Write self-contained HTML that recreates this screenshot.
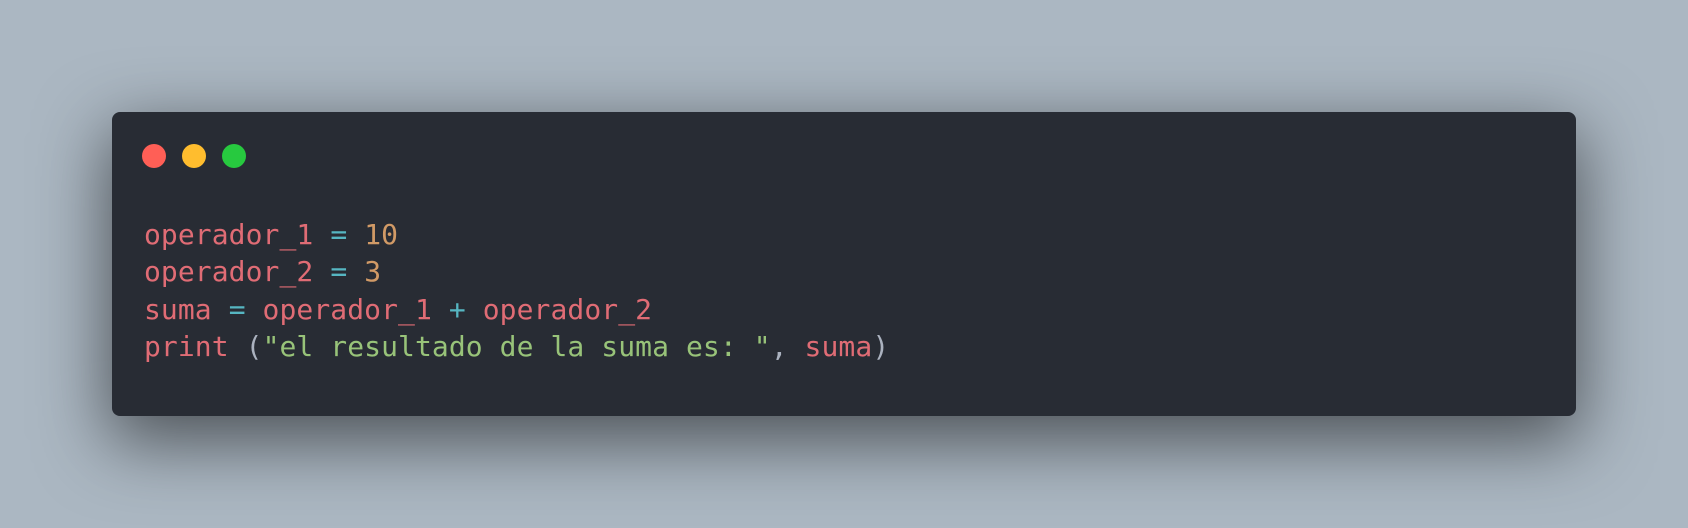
<!DOCTYPE html>
<html><head><style>
html,body{margin:0;padding:0;}
body{width:1688px;height:528px;background:#abb7c2;position:relative;overflow:hidden;}
.win{position:absolute;left:112px;top:112px;width:1464px;height:304px;background:#282c34;border-radius:8px;box-shadow:0 22px 70px 4px rgba(0,0,0,0.55);}
.dot{position:absolute;top:144px;width:24px;height:24px;border-radius:50%;}
pre{position:absolute;left:144px;top:216px;margin:0;font-family:"DejaVu Sans Mono","Liberation Mono",monospace;font-size:28px;line-height:37.3px;color:#e06c75;letter-spacing:0.08px;}
.c{color:#56b6c2}.o{color:#d19a66}.g{color:#98c379}.p{color:#abb2bf}
</style></head><body>
<div class="win"></div>
<div class="dot" style="left:142px;background:#ff5f56"></div>
<div class="dot" style="left:182px;background:#ffbd2e"></div>
<div class="dot" style="left:222px;background:#27c93f"></div>
<pre>operador_1 <span class="c">=</span> <span class="o">10</span>
operador_2 <span class="c">=</span> <span class="o">3</span>
suma <span class="c">=</span> operador_1 <span class="c">+</span> operador_2
print <span class="p">(</span><span class="g">"el resultado de la suma es: "</span><span class="p">,</span> suma<span class="p">)</span></pre>
</body></html>
